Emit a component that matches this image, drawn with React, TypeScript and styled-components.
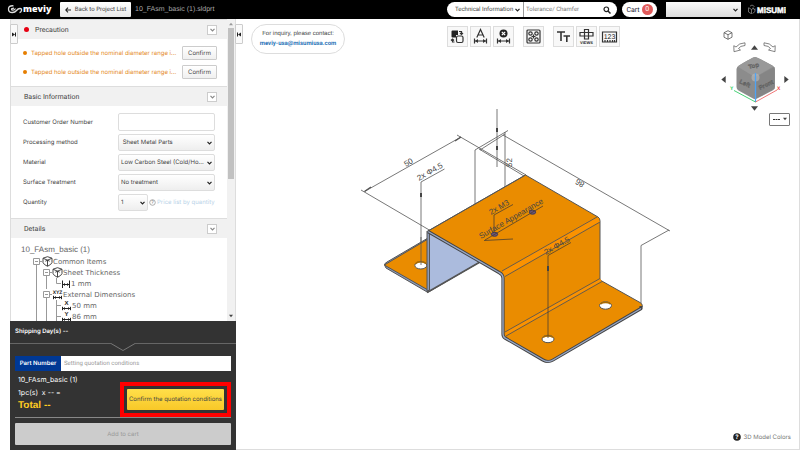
import React from "react";
import styled, { createGlobalStyle } from "styled-components";

const sans = '"Liberation Sans", Arial, sans-serif';
const roboto = 'Roboto, "Liberation Sans", sans-serif';
const inter = 'Inter, "Liberation Sans", sans-serif';

const GlobalStyle = createGlobalStyle`
  *, *::before, *::after { box-sizing: border-box; }
  body { margin: 0; background: #fff; font-family: ${inter}; font-size: 6px; color: #444; text-rendering: geometricPrecision; }
  button, input, select { font: inherit; color: inherit; margin: 0; padding: 0; text-rendering: inherit; }
  svg { display: block; }
`;

const Page = styled.div`
  display: flex;
  flex-direction: column;
  min-height: 100vh;
`;

/* Header */
const Header = styled.header`
  display: flex;
  align-items: center;
  height: 19px;
  padding: 0 14px 0 7px;
  background: #000;
  color: #fff;
  font: 6px ${roboto};
`;
const BackButton = styled.button`
  display: flex;
  align-items: center;
  justify-content: center;
  gap: 4px;
  width: 71px;
  height: 15px;
  margin: 0 4px 0 7px;
  border: 0;
  border-radius: 1px;
  background: linear-gradient(#fff, #e8e8e8);
  color: #444;
  white-space: nowrap;
`;
const FileName = styled.h1`
  flex: 1;
  margin: 0;
  font: 7px ${sans};
  color: #aaa;
  white-space: nowrap;
`;
const SearchPill = styled.form`
  display: flex;
  align-items: center;
  width: 170px;
  height: 15px;
  padding: 0 6px 0 8px;
  border-radius: 8px;
  background: #fff;
  color: #444;
`;
const SearchInput = styled.input`
  flex: 1;
  min-width: 0;
  height: 15px;
  padding-left: 2px;
  border: 0;
  border-left: 1px solid #999;
  background: none;
  outline: 0;
  &::placeholder { color: #777; opacity: 1; }
`;
const IconButton = styled.button`
  display: grid;
  place-items: center;
  border: 0;
  background: none;
`;
const CartButton = styled.button`
  display: flex;
  align-items: center;
  justify-content: center;
  gap: 2px;
  width: 35px;
  height: 15px;
  margin: 0 9px 0 5px;
  border: 0;
  border-radius: 8px;
  background: #fff;
  color: #223;
  font-size: 7px;
`;
const Count = styled.span`
  width: 11px;
  height: 11px;
  border-radius: 50%;
  background: #e05a5a;
  color: #fff;
  line-height: 11px;
`;

const SelectBox = styled.span<{ $w?: number; $plain?: boolean }>`
  position: relative;
  display: block;
  flex: none;
  width: ${(p) => (p.$w ? `${p.$w}px` : "100%")};
  select {
    appearance: none;
    display: block;
    width: 100%;
    height: ${(p) => (p.$plain ? 15 : 17)}px;
    padding: 0 ${(p) => (p.$plain ? 0 : 7)}px 0 ${(p) => (p.$plain ? 0 : 2)}px;
    border: ${(p) => (p.$plain ? "0" : "1px solid #ddd")};
    border-radius: ${(p) => (p.$plain ? 0 : 2)}px;
    background: ${(p) => (p.$plain ? "none" : "linear-gradient(#fff, #eee)")};
    outline: 0;
  }
  svg {
    position: absolute;
    right: 3px;
    top: calc(50% - 2px);
    pointer-events: none;
  }
`;
const AccountSelect = styled(SelectBox)`
  margin-right: 7px;
  select {
    height: 15px;
    border: 0;
    border-radius: 0;
    background: linear-gradient(#fafafa, #ddd);
  }
`;

/* Layout */
const Body = styled.div`
  flex: 1;
  display: grid;
  grid-template-columns: 226px 1fr;
  padding-left: 10px;
`;
const Side = styled.aside`
  position: relative;
  display: flex;
  flex-direction: column;
  border: solid #ddd;
  border-width: 0 1px;
`;
const ScrollArea = styled.div`
  flex: 1 1 0;
  min-height: 0;
  display: grid;
  grid-template-columns: minmax(0, 1fr) 8px;
  overflow: hidden;
`;
const ScrollContent = styled.div`
  min-height: 0;
  overflow: hidden;
`;
const Track = styled.div`
  display: flex;
  flex-direction: column;
  align-items: center;
  padding: 3px 0;
  background: #f1f1f1;
`;
const Thumb = styled.div`
  width: 6px;
  height: 51%;
  margin: 2px 0 auto;
  background: #c1c1c1;
`;
const Tab = styled.button<{ $side: "in" | "out" }>`
  position: absolute;
  top: 5px;
  left: ${(p) => (p.$side === "in" ? "-1px" : "100%")};
  display: grid;
  place-items: center;
  width: 8px;
  height: 20px;
  border: 1px solid #ccc;
  border-radius: 1px;
  background: #fafafa;
`;
const SectionHead = styled.header`
  display: flex;
  align-items: center;
  gap: 6px;
  height: 20px;
  padding: 0 10px 0 13px;
  border-top: 1px solid #ddd;
  background: #f1f1f1;
  h2 { flex: 1; margin: 0; font: 7px ${roboto}; color: #444; }
`;
const Toggle = styled.button`
  display: grid;
  place-items: center;
  width: 10px;
  height: 10px;
  border: 1px solid #ccc;
  background: #fff;
`;
const Dot = styled.i<{ $color: string; $size: number }>`
  flex: none;
  width: ${(p) => p.$size}px;
  height: ${(p) => p.$size}px;
  border-radius: 50%;
  background: ${(p) => p.$color};
`;
const Warnings = styled.ul`
  display: grid;
  grid-template-columns: minmax(0, 1fr);
  gap: 5px;
  margin: 0;
  padding: 7px 10px 7px 12px;
  list-style: none;
  li { display: flex; align-items: center; height: 14px; gap: 4px; }
  p { flex: 1; min-width: 0; margin: 0; white-space: nowrap; color: #e58a1f; }
`;
const ConfirmButton = styled.button`
  flex: none;
  width: 35px;
  height: 14px;
  border: 1px solid #ccc;
  border-radius: 1px;
  background: linear-gradient(#fff, #f0f0f0);
`;
const Form = styled.div`
  display: grid;
  grid-template-columns: 95px minmax(0, 1fr);
  align-items: center;
  row-gap: 3px;
  padding: 7px 12px;
`;
const Label = styled.label`
  white-space: nowrap;
`;
const TextInput = styled.input`
  width: 100%;
  height: 18px;
  border: 1px solid #ddd;
  border-radius: 2px;
`;
const Quantity = styled.div`
  display: flex;
  align-items: center;
  gap: 1px;
  svg { flex: none; }
  a { color: #b9d3e8; text-decoration: none; white-space: nowrap; }
`;
const Tree = styled.div`
  padding: 6px 10px;
  font: 7px "DejaVu Sans", Verdana, sans-serif;
  color: #666;
  h3 { margin: 0; font: 8px/12px ${sans}; }
  ul { margin: 0; padding: 0; list-style: none; }
`;
const TreeRow = styled.li<{ $level: number }>`
  display: flex;
  align-items: center;
  height: 11px;
  padding-left: ${(p) => p.$level * 10 + 12}px;
  white-space: nowrap;
`;

/* Order panel */
const Order = styled.section`
  display: flex;
  flex-direction: column;
  margin: 0 -1px;
  background: #333;
  color: #fff;
`;
const Shipping = styled.div`
  height: 22px;
  padding: 0 5px;
  line-height: 21px;
  font-weight: 600;
`;
const Divider = styled.div`
  display: grid;
  grid-template-columns: 1fr 24px 1fr;
  height: 13px;
  i { border-top: 1px solid #666; }
`;
const PartRow = styled.div`
  display: flex;
  height: 15px;
  margin: 0 5px;
  label { flex: none; width: 46px; background: #003894; font-weight: 600; line-height: 15px; text-align: center; }
  input { flex: 1; min-width: 0; padding-left: 3px; border: 0; background: #fff; color: #999; font-family: ${roboto}; }
`;
const Summary = styled.div`
  display: flex;
  justify-content: space-between;
  align-items: flex-end;
  height: 47px;
  margin: 0 5px;
  border-bottom: 1px solid #888;
`;
const Lines = styled.div`
  align-self: flex-start;
  padding: 2px 3px;
  line-height: 13px;
  white-space: nowrap;
  p { margin: 0; font-family: ${inter}; font-size: 7px; }
  strong { display: block; font: bold 10px/14px ${sans}; color: #fc2; }
`;
const Highlight = styled.div`
  flex: none;
  padding: 3px;
  border: 4px solid #f00;
`;
const QuoteButton = styled.button`
  display: block;
  width: 97px;
  height: 21px;
  border: 0;
  border-radius: 1px;
  background: linear-gradient(#ffdf4a, #f8c828);
  color: #444;
  white-space: nowrap;
`;
const CartAdd = styled.button`
  height: 22px;
  margin: 5px;
  border: 0;
  border-radius: 1px;
  background: #ccc;
  color: #999;
`;

/* Viewer */
const Viewer = styled.main`
  display: grid;
  grid-template: 1fr / 1fr;
  border: solid #ddd;
  border-width: 0 1px 1px 0;
  > * { grid-area: 1 / 1; }
`;
const Overlay = styled.div`
  display: flex;
  flex-direction: column;
  justify-content: space-between;
  padding: 5px 8px 8px 15px;
`;
const TopRow = styled.div`
  display: grid;
  grid-template-columns: 196px 1fr auto;
  align-items: start;
`;
const Contact = styled.address`
  display: grid;
  place-content: center;
  width: 94px;
  height: 30px;
  border: 1px solid #ddd;
  border-radius: 15px;
  font: 6px/9px ${sans};
  text-align: center;
  white-space: nowrap;
  a { color: #2b74b8; font-family: ${roboto}; font-weight: 700; text-decoration: none; }
`;
const Tools = styled.div`
  display: flex;
  gap: 9px;
  padding-top: 2px;
`;
const ToolGroup = styled.div`
  display: flex;
  gap: 2px;
`;
const Tool = styled.button`
  display: grid;
  place-items: center;
  width: 21px;
  height: 21px;
  border: 1px solid #ddd;
  background: #f8f8f8;
`;
const Nav = styled.div`
  display: grid;
  grid-template-columns: 8px 55px 8px;
  grid-template-rows: 10px 14px 50px 8px 14px;
  place-items: center;
  padding: 6px 1px 0 0;
`;
const NavCell = styled.div<{ $area: string }>`
  grid-area: ${(p) => p.$area};
`;
const Turns = styled.div`
  grid-area: 2 / 2;
  display: flex;
  justify-content: space-between;
  align-items: center;
  width: 43px;
`;
const MoreButton = styled.button`
  grid-area: 5 / 1 / 6 / 4;
  justify-self: end;
  display: flex;
  align-items: center;
  justify-content: center;
  gap: 3px;
  width: 21px;
  height: 13px;
  border: 1px solid #777;
  border-radius: 1px;
  background: #fff;
`;
const ColorsLink = styled.a`
  display: flex;
  align-items: center;
  align-self: flex-end;
  gap: 2px;
  color: #777;
  text-decoration: none;
`;

const Chevron = ({ color = "#222" }: { color?: string }) => (
  <svg width="5" height="4" viewBox="0 0 5 4" fill="none" stroke={color} strokeWidth="1.2">
    <path d="M.5 .8 2.5 2.8 4.5 .8" />
  </svg>
);
const Triangle = ({ turn = 0, size = 7, color = "#444" }: { turn?: number; size?: number; color?: string }) => (
  <svg width={size} height={size} viewBox="0 0 8 8" fill={color}>
    <path d="M4 1.5 8 6.5H0z" transform={`rotate(${turn} 4 4)`} />
  </svg>
);

function Select({ id, value, w, plain, label }: { id?: string; value: string; w?: number; plain?: boolean; label?: string }) {
  return (
    <SelectBox $w={w} $plain={plain}>
      <select id={id} aria-label={label} defaultValue={value}>
        <option>{value}</option>
      </select>
      <Chevron />
    </SelectBox>
  );
}

function Section({ title, dot }: { title: string; dot?: boolean }) {
  return (
    <SectionHead>
      {dot && <Dot $color="#e60012" $size={5} />}
      <h2>{title}</h2>
      <Toggle aria-label={`Collapse ${title}`}><Chevron color="#888" /></Toggle>
    </SectionHead>
  );
}

const TreeIcon = ({ kind }: { kind: string }) => {
  if (kind === "cube")
    return (
      <svg width="11" height="11" viewBox="0 0 11 11" fill="none" stroke="#333" strokeWidth=".9">
        <path d="M5.5 .7 10 2.200V6.500Q9.500 8.500 5.500 10.300 1.500 8.500 1 6.500V2.200zM1.200 2.300 5.500 4.200 9.800 2.300M5.500 4.200V10M3.300 5.200 5.500 4.200 7.700 5.200" />
      </svg>
    );
  if (kind === "thick")
    return (
      <svg width="10" height="10" viewBox="0 0 10 10" stroke="#222" fill="#222">
        <path d="M1.5 1.5V9M8.5 1.5V9M2 5.5H8" fill="none" />
        <path d="M2 5.5 4 4V7zM8 5.5 6 4V7z" stroke="none" />
      </svg>
    );
  return (
    <svg width="11" height="11" viewBox="0 0 11 11" stroke="#222" fill="#222">
      <text x="5.5" y="5" textAnchor="middle" fontSize={kind === "XYZ" ? 5 : 6} fontWeight="700" fontFamily="Liberation Sans" stroke="none">{kind}</text>
      <path d="M2 8.5H9M1.5 6.8V10.2M9.5 6.8V10.2" fill="none" />
      <path d="M2 8.5 4 7V10zM9 8.5 7 7V10z" stroke="none" />
    </svg>
  );
};

const Branch = ({ open, last, level }: { open: boolean; last?: boolean; level: number }) => (
  <svg width={open ? 9 : 8} height="11" viewBox={open ? "0 0 9 11" : "0 0 8 11"} fill="none" stroke="#999" overflow="visible">
    {level > 0 && <path d="M-6.5 0V11" />}
    {level > 1 && <path d="M-16.5 0V11" />}
    {open ? (
      <>
        <path d="M3.5 8V11M6 5.5H9" />
        <path d="M.5 2.5h6v6h-6zM2 5.5H5" fill="#fff" />
      </>
    ) : (
      <path d={last ? "M3.5 0V5.5H8" : "M3.5 0V11M3.5 5.5H8"} />
    )}
  </svg>
);

const treeRows = [
  { text: "Common Items", icon: "cube", level: 0, open: true },
  { text: "Sheet Thickness", icon: "cube", level: 1, open: true },
  { text: "1 mm", icon: "thick", level: 2, open: false, last: true },
  { text: "External Dimensions", icon: "XYZ", level: 1, open: true },
  { text: "50 mm", icon: "X", level: 2, open: false },
  { text: "86 mm", icon: "Y", level: 2, open: false },
];

const toolGroups = [["swap", "dimA", "dimX"], ["holes"], ["text", "views", "ruler"]];
const toolLabels: Record<string, string> = {
  swap: "Swap faces", dimA: "Add dimension", dimX: "Hide dimension", holes: "Hole groups",
  text: "Text size", views: "Views", ruler: "Measure",
};
const ToolIcon = ({ kind }: { kind: string }) => (
  <svg width="17" height="17" viewBox="0 0 17 17" fill="none" stroke="#333" strokeWidth="1.2">
    {kind === "swap" && (
      <>
        <path d="M2.500 3.500Q2.500 2.500 3.500 2.500H9V7H7V9.500H3.500Q2.500 9.500 2.500 8.500z" fill="#222" stroke="none" />
        <rect x="7.500" y="8" width="6.500" height="6.500" rx="1.500" fill="#f8f8f8" />
        <path d="M10 3.500H12.500V6.500M11 5 12.500 6.500 14 5M5.500 14H3.500V11M2 12.500 3.500 11 5 12.500" />
      </>
    )}
    {(kind === "dimA" || kind === "dimX") && (
      <>
        <path d="M2.500 10.500V15.500M14.500 10.500V15.500M3 13H14" />
        <path d="M3 13 6 11V15zM14 13 11 11V15z" fill="#333" stroke="none" />
      </>
    )}
    {kind === "dimA" && <path d="M4.800 9.500 8.500 1.500 12.200 9.500M6 7H11" />}
    {kind === "dimX" && (
      <>
        <circle cx="8.500" cy="5.500" r="4" fill="#222" stroke="none" />
        <path d="M6.800 3.800 10.200 7.200M10.200 3.800 6.800 7.200" stroke="#fff" />
      </>
    )}
    {kind === "holes" && (
      <>
        <rect x="2" y="2" width="13" height="13" rx="1" />
        <circle cx="5.500" cy="5.500" r="1.700" /><circle cx="11.500" cy="5.500" r="1.700" />
        <circle cx="5.500" cy="11.500" r="1.700" /><circle cx="11.500" cy="11.500" r="1.700" />
        <path d="M8.500 6.500V10.500M6.500 8.500H10.500" />
      </>
    )}
    {kind === "text" && <path d="M2 4H10M6 4V13M8.500 8H15M11.800 8V14" strokeWidth="1.600" />}
    {kind === "views" && (
      <>
        <path d="M6.500 1.500H10.500V4.500H15V8H10.500V11H6.500V8H2V4.500H6.500zM6.500 4.500H10.500V8H6.500z" />
        <text x="8.500" y="15.500" textAnchor="middle" fontSize="4" fontWeight="700" fontFamily="Liberation Sans" fill="#222" stroke="none">VIEWS</text>
      </>
    )}
    {kind === "ruler" && (
      <>
        <path d="M1.500 4H15.500V14H1.500zM4 14V12M6.500 14V12M9 14V12M11.500 14V12M13.500 14V12" />
        <text x="8.500" y="11" textAnchor="middle" fontSize="7" fontFamily="Liberation Sans" fill="#222" stroke="none">123</text>
      </>
    )}
  </svg>
);

const noteText = { fontFamily: "Liberation Sans", fill: "#444", stroke: "none" };

function Model() {
  return (
    <svg width="100%" height="100%" viewBox="236 19 563 430" preserveAspectRatio="xMidYMid meet" fill="none" stroke="#555" strokeWidth="1" strokeLinejoin="round" role="img" aria-label="Sheet metal bracket model">
      <g strokeWidth=".8">
        <path d="M364.500 191.500 461 137M361 190 431 231M457 135 526 175M479 149 524 176" />
        <path d="M475 204V150L508 130.500M480 150 505 134M497 109V167M505 187V132M503 135 670 231M669 230 641 245.500V306" />
        <path d="M421 265V182L444.500 169" />
        <path d="M364.500 191.500 371 187M461 137 455 141" strokeWidth="1.400" />
      </g>
      <path d="M385 266Q383 264 387 262L428 238V292.500L386 268z" fill="#8d9bb8" />
      <path d="M386 264 428 239V290L386 266Q383 265 386 264z" fill="#ea8c00" />
      <ellipse cx="420.800" cy="265.300" rx="6" ry="3.700" fill="#fff" />
      <path d="M415.500 263.700A6 3.700 0 0 1 426 263.700" stroke="#a86a00" strokeWidth="1.400" />
      <path d="M421 265V237" strokeWidth=".8" />
      <path d="M428.500 231V292L480 262z" fill="#abbbdd" />
      <path d="M427 231V291L429.500 290V232z" fill="#8d9bb8" />
      <path d="M427 292.500 480 262" strokeWidth="1.600" />
      <path d="M428 231 525.500 175 598 217Q600 218 600 221V280L640 302.500Q644 305 641 308L553 360Q548 363 543 360L505 338Q503 337 503 334V278Q503 274 499 272z" fill="#ea8c00" />
      <path d="M428 231.500 499 272.500Q503 274.500 503 278V334Q503 337 505 338L543 360Q548 363 553 360L641 308.500V306" stroke="#444" strokeWidth="3.200" />
      <path d="M428 231.500 499 272.500Q503 274.500 503 278V334Q503 337 505 338L543 360Q548 363 553 360L641 308.500" stroke="#9aa8c4" strokeWidth="1.400" />
      <path d="M502 271 590 220Q595 217 598 218L600 222 505 276.500z" fill="#fb9200" stroke="none" />
      <path d="M505 332 600 278.500 602 281.500 506 336z" fill="#fb9200" stroke="none" />
      <path d="M502 271 597 217M505 276.500 600 222M505 332 600 278.500M506 336 602 281.500M428 231 525.500 175" strokeWidth=".9" />
      {[[548, 339], [605.500, 305.500]].map(([x, y]) => (
        <g key={x}>
          <ellipse cx={x} cy={y} rx="6" ry="3.700" fill="#fff" />
          <path d={`M${x - 5} ${y - 1.500}A6 3.700 0 0 1 ${x + 5} ${y - 1.500}`} stroke="#a86a00" strokeWidth="1.600" />
        </g>
      ))}
      {[[494.500, 234.300], [532.500, 212.200]].map(([x, y]) => (
        <ellipse key={x} cx={x} cy={y} rx="3.200" ry="2" fill="#6b5578" stroke="#443a55" />
      ))}
      <path d="M494 233V215L513 204.500M485 240 543 206M484 240.500 513 239M548 338V255.500L571 242.500" strokeWidth=".8" stroke="#4d4030" />
      <g {...noteText} fontSize="8">
        <text transform="translate(406 167) rotate(-30)">50</text>
        <text transform="translate(419 181) rotate(-30)">2x Φ4.5</text>
        <text transform="translate(491 215) rotate(-30)">2x M3</text>
        <text transform="translate(481 239) rotate(-30)">Surface Appearance</text>
        <text transform="translate(546 255) rotate(-30)">2x Φ4.5</text>
        <text transform="translate(585 183) rotate(-150)">86</text>
        <text transform="translate(512 167) rotate(-90)">52</text>
      </g>
      <g fill="#444" stroke="none">
        <path d="M420 193h2v4h-2zM496 128h2v4h-2zM496 146h2v4h-2zM547 266h2v5h-2z" />
      </g>
    </svg>
  );
}

const TurnArrow = ({ flip }: { flip?: boolean }) => (
  <svg width="13" height="11" viewBox="0 0 13 11" fill="#fff" stroke="#666" strokeWidth=".8">
    <path d="M12 .8V3.500Q7 3.800 5.500 6.500L7.500 8 1 9.700 .8 3.700 3 5Q6 1 12 .8z" transform={flip ? "matrix(-1 0 0 1 13 0)" : undefined} />
  </svg>
);

const ViewCube = () => (
  <svg width="52" height="50" viewBox="728 54 52 50">
    <path d="M754 57Q756 57 771.500 65.500 774 67 774 69V87Q774 89 771.500 90.500L756 98.500Q754 99.500 752 98.500L737.500 90.500Q735.500 89 735.500 87V69Q735.500 67 738 65.500 752 57 754 57z" fill="#8c8c8c" />
    <path d="M754 57Q756 57 772.500 66.500L756 76Q754 77 752 76L736.500 66.500Q752 57 754 57z" fill="#999" />
    <path d="M755 77 773.500 67V88.500L755 98.500z" fill="#858585" />
    <g fontFamily="Liberation Sans" fontSize="6" fill="#777" stroke="#555" strokeWidth=".3" fontWeight="700">
      <text transform="translate(748 69) rotate(-14)">Top</text>
      <text transform="translate(738 83) rotate(24)">Left</text>
      <text transform="translate(759 90) rotate(-26)">Front</text>
    </g>
    <circle cx="754.500" cy="77.500" r="4" fill="#b5b5b5" opacity=".7" />
    <path d="M754.500 102V73" stroke="#4da3f5" strokeWidth="1.300" />
    <path d="M754.500 102 733 90.500" stroke="#3c6" strokeWidth=".9" />
    <path d="M754.500 102 776 90" stroke="#e66" strokeWidth=".9" />
    <g fontFamily="Liberation Sans" fontSize="5" fontWeight="700">
      <text x="729" y="90" fill="#2c5">Y</text>
      <text x="776" y="90" fill="#e44">X</text>
    </g>
  </svg>
);

export default function App() {
  return (
    <Page>
      <GlobalStyle />
      <Header>
        <svg width="46" height="13" viewBox="0 0 46 13" role="img" aria-label="meviy">
          <path d="M6.500 2.800Q1.500 2.300 1.500 6T5.500 9.500Q8 9.500 9.500 7.500T13 5.500 14.500 7.500 12.500 9.500M7 5.200Q4.500 5.200 4.500 6.200T6 7.200 8.500 5.500" fill="none" stroke="#ddd" strokeWidth="1.300" />
          <text x="16" y="9" fontFamily="Open Sans" fontWeight="800" fontSize="9" fill="#fff">meviy</text>
        </svg>
        <BackButton>
          <svg width="6" height="6" viewBox="0 0 6 6" fill="none" stroke="#222" strokeWidth="1.100"><path d="M6 3H.8M3 .6.8 3 3 5.400" /></svg>
          Back to Project List
        </BackButton>
        <FileName>10_FAsm_basic (1).sldprt</FileName>
        <SearchPill role="search">
          <Select value="Technical Information" w={68} plain label="Search category" />
          <SearchInput placeholder="Tolerance/ Chamfer" aria-label="Search" />
          <IconButton type="button" aria-label="Search">
            <svg width="8" height="8" viewBox="0 0 8 8" fill="none" stroke="#222" strokeWidth="1.200"><circle cx="3.300" cy="3.300" r="2.300" /><path d="M5 5 7.500 7.500" strokeWidth="1.500" /></svg>
          </IconButton>
        </SearchPill>
        <CartButton>Cart <Count>0</Count></CartButton>
        <AccountSelect $w={75}>
          <select aria-label="Account"><option></option></select>
          <Chevron />
        </AccountSelect>
        <svg width="38" height="11" viewBox="0 0 38 11" role="img" aria-label="MiSUMi">
          <path d="M.500 3.500 3.500 5.500 6 3.800M3.500 5.500V10M.500 4V8L3 9.500M6.500 2.500 4 1 2 2.200M7 4.500V7.500L4.500 9.500M4.500 4 7 6" fill="none" stroke="#999" strokeWidth=".7" />
          <text x="9" y="9" fontFamily="Liberation Sans" fontWeight="700" fontSize="8" fill="#fff" stroke="#fff" strokeWidth=".4">MiSUMi</text>
        </svg>
      </Header>
      <Body>
        <Side>
          <Tab $side="in" aria-label="Expand panel">
            <svg width="4" height="5" viewBox="0 0 4 5" fill="#222"><path d="M0 .5 3 2.500 0 4.500zM3 .5H4V4.500H3z" /></svg>
          </Tab>
          <Tab $side="out" aria-label="Collapse panel">
            <svg width="4" height="5" viewBox="0 0 4 5" fill="#222"><path d="M4 .5 1 2.500 4 4.500zM0 .5H1V4.500H0z" /></svg>
          </Tab>
          <ScrollArea>
            <ScrollContent>
              <Section title="Precaution" dot />
              <Warnings>
                {[0, 1].map((i) => (
                  <li key={i}>
                    <Dot $color="#e67e00" $size={4} />
                    <p>Tapped hole outside the nominal diameter range i...</p>
                    <ConfirmButton>Confirm</ConfirmButton>
                  </li>
                ))}
              </Warnings>
              <Section title="Basic Information" />
              <Form>
                <Label htmlFor="order">Customer Order Number</Label>
                <TextInput id="order" />
                <Label htmlFor="method">Processing method</Label>
                <Select id="method" value={"\u00a0Sheet Metal Parts"} />
                <Label htmlFor="material">Material</Label>
                <Select id="material" value="Low Carbon Steel (Cold/Ho..." />
                <Label htmlFor="surface">Surface Treatment</Label>
                <Select id="surface" value="No treatment" />
                <Label htmlFor="qty">Quantity</Label>
                <Quantity>
                  <Select id="qty" value="1" w={30} />
                  <svg width="7" height="7" viewBox="0 0 7 7"><circle cx="3.500" cy="3.500" r="2.800" fill="none" stroke="#999" strokeWidth=".8" /><text x="3.500" y="5.300" textAnchor="middle" fontSize="5" fill="#888">?</text></svg>
                  <a href="#prices">Price list by quantity</a>
                </Quantity>
              </Form>
              <Section title="Details" />
              <Tree>
                <h3>10_FAsm_basic (1)</h3>
                <ul>
                  {treeRows.map((r) => (
                    <TreeRow key={r.text} $level={r.level}>
                      <Branch open={r.open} last={r.last} level={r.level} />
                      <TreeIcon kind={r.icon} />
                      {r.text}
                    </TreeRow>
                  ))}
                </ul>
              </Tree>
            </ScrollContent>
            <Track>
              <Triangle size={4} color="#999" />
              <Thumb />
              <Triangle size={4} turn={180} />
            </Track>
          </ScrollArea>
          <Order>
            <Shipping>Shipping Day(s) --</Shipping>
            <Divider>
              <i />
              <svg width="24" height="9" viewBox="0 0 24 9" fill="none" stroke="#777"><path d="M0 .5 12 7.500 24 .5" /></svg>
              <i />
            </Divider>
            <PartRow>
              <label htmlFor="part">Part Number</label>
              <input id="part" defaultValue="Setting quotation conditions" />
            </PartRow>
            <Summary>
              <Lines>
                <p>10_FAsm_basic (1)</p>
                <p>1pc(s) &nbsp;x -- =</p>
                <strong>Total --</strong>
              </Lines>
              <Highlight><QuoteButton>Confirm the quotation conditions</QuoteButton></Highlight>
            </Summary>
            <CartAdd disabled>Add to cart</CartAdd>
          </Order>
        </Side>
        <Viewer>
          <Model />
          <Overlay>
            <TopRow>
              <Contact>
                For inquiry, please contact:
                <a href="mailto:meviy-usa@misumiusa.com">meviy-usa@misumiusa.com</a>
              </Contact>
              <Tools>
                {toolGroups.map((group) => (
                  <ToolGroup key={group[0]}>
                    {group.map((kind) => (
                      <Tool key={kind} aria-label={toolLabels[kind]}><ToolIcon kind={kind} /></Tool>
                    ))}
                  </ToolGroup>
                ))}
              </Tools>
              <Nav>
                <NavCell $area="1 / 1 / 2 / 2">
                  <IconButton aria-label="Isometric view">
                    <svg width="10" height="10" viewBox="0 0 10 10" overflow="visible" fill="none" stroke="#555" strokeWidth=".8"><path transform="translate(5)" d="M5 .7 9 2.700V7.200L5 9.300 1 7.200V2.700zM1 2.700 5 4.700 9 2.700M5 4.700V9.300" /></svg>
                  </IconButton>
                </NavCell>
                <Turns>
                  <IconButton aria-label="Rotate left"><TurnArrow /></IconButton>
                  <IconButton aria-label="Turn up"><Triangle /></IconButton>
                  <IconButton aria-label="Rotate right"><TurnArrow flip /></IconButton>
                </Turns>
                <NavCell $area="3 / 1"><IconButton aria-label="Turn left"><Triangle turn={-90} /></IconButton></NavCell>
                <NavCell $area="3 / 2"><ViewCube /></NavCell>
                <NavCell $area="3 / 3"><IconButton aria-label="Turn right"><Triangle turn={90} /></IconButton></NavCell>
                <NavCell $area="4 / 2"><IconButton aria-label="Turn down"><Triangle turn={180} /></IconButton></NavCell>
                <MoreButton aria-label="More view options">
                  <svg width="7" height="3" viewBox="0 0 7 3" fill="#333"><path d="M0 1h2v1H0zM2.500 1h2v1h-2zM5 1h2v1H5z" /></svg>
                  <Triangle turn={180} size={4} />
                </MoreButton>
              </Nav>
            </TopRow>
            <ColorsLink href="#colors">
              <svg width="8" height="8" viewBox="0 0 8 8"><circle cx="4" cy="4" r="3.800" fill="#222" /><text x="4" y="6.300" textAnchor="middle" fontSize="6" fontWeight="700" fill="#fff">?</text></svg>
              3D Model Colors
            </ColorsLink>
          </Overlay>
        </Viewer>
      </Body>
    </Page>
  );
}
